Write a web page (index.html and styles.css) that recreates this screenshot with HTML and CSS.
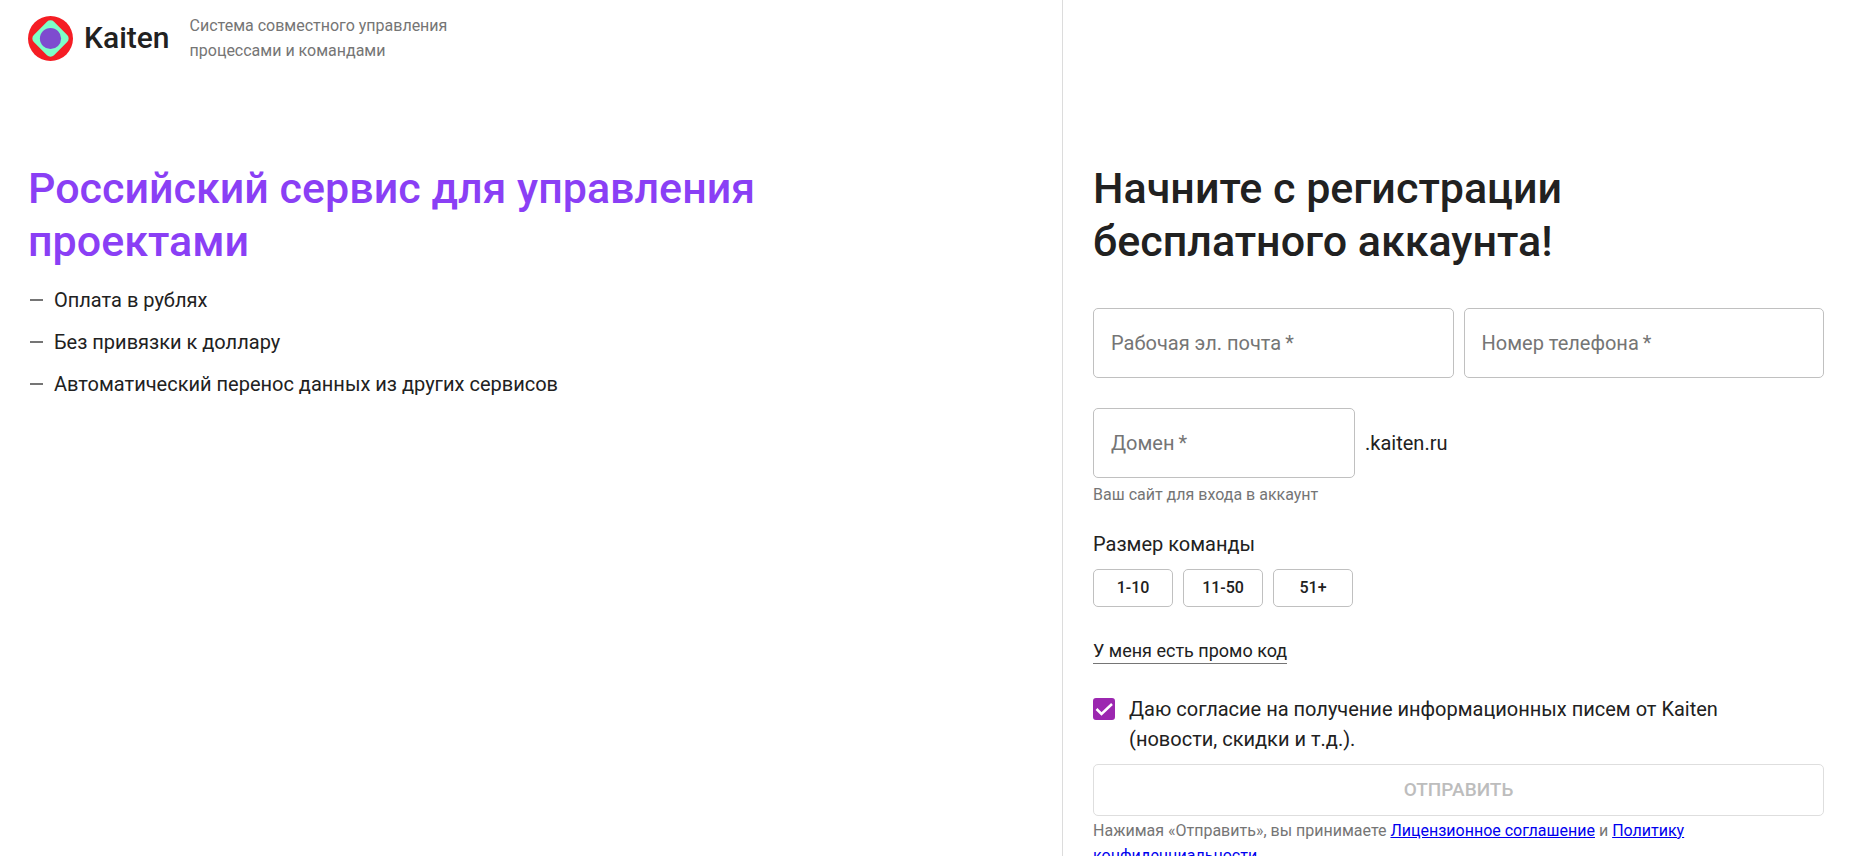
FILE: index.html
```html
<!DOCTYPE html>
<html lang="ru">
<head>
<meta charset="utf-8">
<meta name="viewport" content="width=device-width, initial-scale=1">
<title>Kaiten</title>
<link rel="stylesheet" href="styles.css">
</head>
<body>
<div class="page">
  <main class="intro">
    <header class="brand">
      <svg class="brand-mark" viewBox="0 0 45 45" aria-hidden="true">
        <circle cx="22.5" cy="22.5" r="22.5" fill="#f51d24"/>
        <rect x="8.2" y="8.2" width="28.6" height="28.6" rx="5" fill="#7dffc8" transform="rotate(45 22.5 22.5)"/>
        <circle cx="22.5" cy="22.5" r="10.6" fill="#7e4bcf"/>
      </svg>
      <span class="brand-name">Kaiten</span>
      <p class="caption brand-tagline">Система совместного управления<br>процессами и командами</p>
    </header>
    <h1 class="title title-accent">Российский сервис для управления проектами</h1>
    <ul class="benefits">
      <li class="benefit">Оплата в рублях</li>
      <li class="benefit">Без привязки к доллару</li>
      <li class="benefit">Автоматический перенос данных из других сервисов</li>
    </ul>
  </main>
  <section class="signup">
    <h2 class="title signup-title">Начните с регистрации бесплатного аккаунта!</h2>
    <form class="form">
      <div class="row contacts">
        <div class="field">
          <input class="field-input" id="email" type="email" placeholder=" " required>
          <label class="field-label" for="email">Рабочая эл. почта&thinsp;*</label>
        </div>
        <div class="field">
          <input class="field-input" id="phone" type="tel" placeholder=" " required>
          <label class="field-label" for="phone">Номер телефона&thinsp;*</label>
        </div>
      </div>
      <div class="row domain">
        <div class="field field-domain">
          <input class="field-input" id="domain" type="text" placeholder=" " required>
          <label class="field-label" for="domain">Домен&thinsp;*</label>
        </div>
        <span class="domain-suffix">.kaiten.ru</span>
      </div>
      <p class="caption domain-hint">Ваш сайт для входа в аккаунт</p>
      <p class="team-label" id="team">Размер команды</p>
      <div class="row" role="group" aria-labelledby="team">
        <button class="size-button" type="button">1-10</button>
        <button class="size-button" type="button">11-50</button>
        <button class="size-button" type="button">51+</button>
      </div>
      <button class="promo" type="button">У меня есть промо код</button>
      <div class="consent">
        <input class="consent-box" id="consent" type="checkbox" checked>
        <svg class="consent-tick" viewBox="0 0 22 22" aria-hidden="true"><path d="M3.500 11l5 5L19 6" fill="none" stroke="#fff" stroke-width="2.500"/></svg>
        <label class="consent-label" for="consent">Даю согласие на получение информационных писем от Kaiten (новости, скидки и т.д.).</label>
      </div>
      <button class="submit" type="submit" disabled>ОТПРАВИТЬ</button>
      <p class="caption terms">Нажимая «Отправить», вы принимаете <a class="terms-link" href="#license">Лицензионное соглашение</a> и <a class="terms-link" href="#privacy">Политику конфиденциальности</a></p>
    </form>
  </section>
</div>
</body>
</html>
```
FILE: styles.css
```css
* {
  box-sizing: border-box;
}

body {
  margin: 0;
  background: #fff;
  color: #212121;
  font-family: Roboto, "Noto Sans", sans-serif;
  font-size: 20px;
  line-height: 30px;
}

h1,
h2,
p,
ul {
  margin: 0;
  padding: 0;
}

button,
input {
  font-family: inherit;
  color: inherit;
}

.page {
  display: grid;
  grid-template-columns: 35fr 26fr;
  height: 100vh;
  overflow: hidden;
}

.intro {
  padding: 13px 28px;
}

.brand {
  display: flex;
  align-items: center;
  height: 50px;
  margin-bottom: 99px;
}

.brand-mark {
  width: 45px;
  height: 45px;
  margin-right: 11px;
}

.brand-name {
  font-size: 30px;
  font-weight: 500;
  margin-right: 20px;
}

.caption {
  color: #757575;
  font-size: 16px;
  line-height: 25px;
}

.title {
  font-size: 43px;
  font-weight: 500;
  line-height: 53px;
}

.title-accent {
  max-width: 800px;
  color: #8a3ff5;
}

.benefits {
  display: flex;
  flex-direction: column;
  gap: 12px;
  margin-top: 17px;
  list-style: none;
}

.benefit {
  display: flex;
  align-items: center;
}

.benefit::before {
  content: "";
  width: 13px;
  height: 2px;
  margin: 0 11px 0 2px;
  background: #757575;
}

.signup {
  padding: 162px 27px 0 30px;
  border-left: 1px solid #dcdcdc;
}

.signup-title {
  max-width: 600px;
}

.form {
  margin-top: 40px;
}

.row {
  display: flex;
  gap: 10px;
}

.domain {
  align-items: center;
  margin-top: 30px;
}

.field {
  position: relative;
  flex: 1;
}

.field-domain {
  flex: 0 0 262px;
}

.field-input {
  display: block;
  width: 100%;
  height: 70px;
  padding: 0 17px;
  border: 1px solid #c0c0c0;
  border-radius: 5px;
  background: none;
  font-size: 20px;
}

.field-label {
  position: absolute;
  top: 20px;
  left: 18px;
  color: #757575;
  pointer-events: none;
}

.field-input:focus + .field-label,
.field-input:not(:placeholder-shown) + .field-label {
  top: -12px;
  padding: 0 4px;
  background: #fff;
  font-size: 16px;
}

.domain-hint {
  margin-top: 4px;
}

.team-label {
  margin: 22px 0 10px;
}

.size-button {
  width: 80px;
  height: 38px;
  padding: 0 0 1px;
  border: 1px solid #c0c0c0;
  border-radius: 5px;
  background: none;
  font-size: 16px;
  font-weight: 500;
}

.promo {
  display: block;
  margin-top: 32px;
  padding: 0;
  border: 0;
  border-bottom: 1px solid #757575;
  background: none;
  font-size: 18px;
  line-height: 24px;
}

.consent {
  display: grid;
  grid-template-columns: 22px 1fr;
  column-gap: 14px;
  max-width: 680px;
  margin-top: 30px;
}

.consent-box,
.consent-tick {
  grid-area: 1 / 1;
  width: 22px;
  height: 22px;
  margin: 4px 0 0;
}

.consent-box {
  appearance: none;
  border: 2px solid #757575;
  border-radius: 3px;
}

.consent-box:checked {
  border-color: #9c27b0;
  background: #9c27b0;
}

.consent-tick {
  pointer-events: none;
}

.submit {
  display: block;
  width: 100%;
  height: 52px;
  margin-top: 10px;
  padding: 0 0 2px;
  border: 1px solid #dedede;
  border-radius: 5px;
  background: none;
  color: #bdbdbd;
  font-size: 19px;
  font-weight: 500;
}

.terms {
  max-width: 640px;
  margin-top: 2px;
}

.terms-link {
  color: #0000ee;
}
```
